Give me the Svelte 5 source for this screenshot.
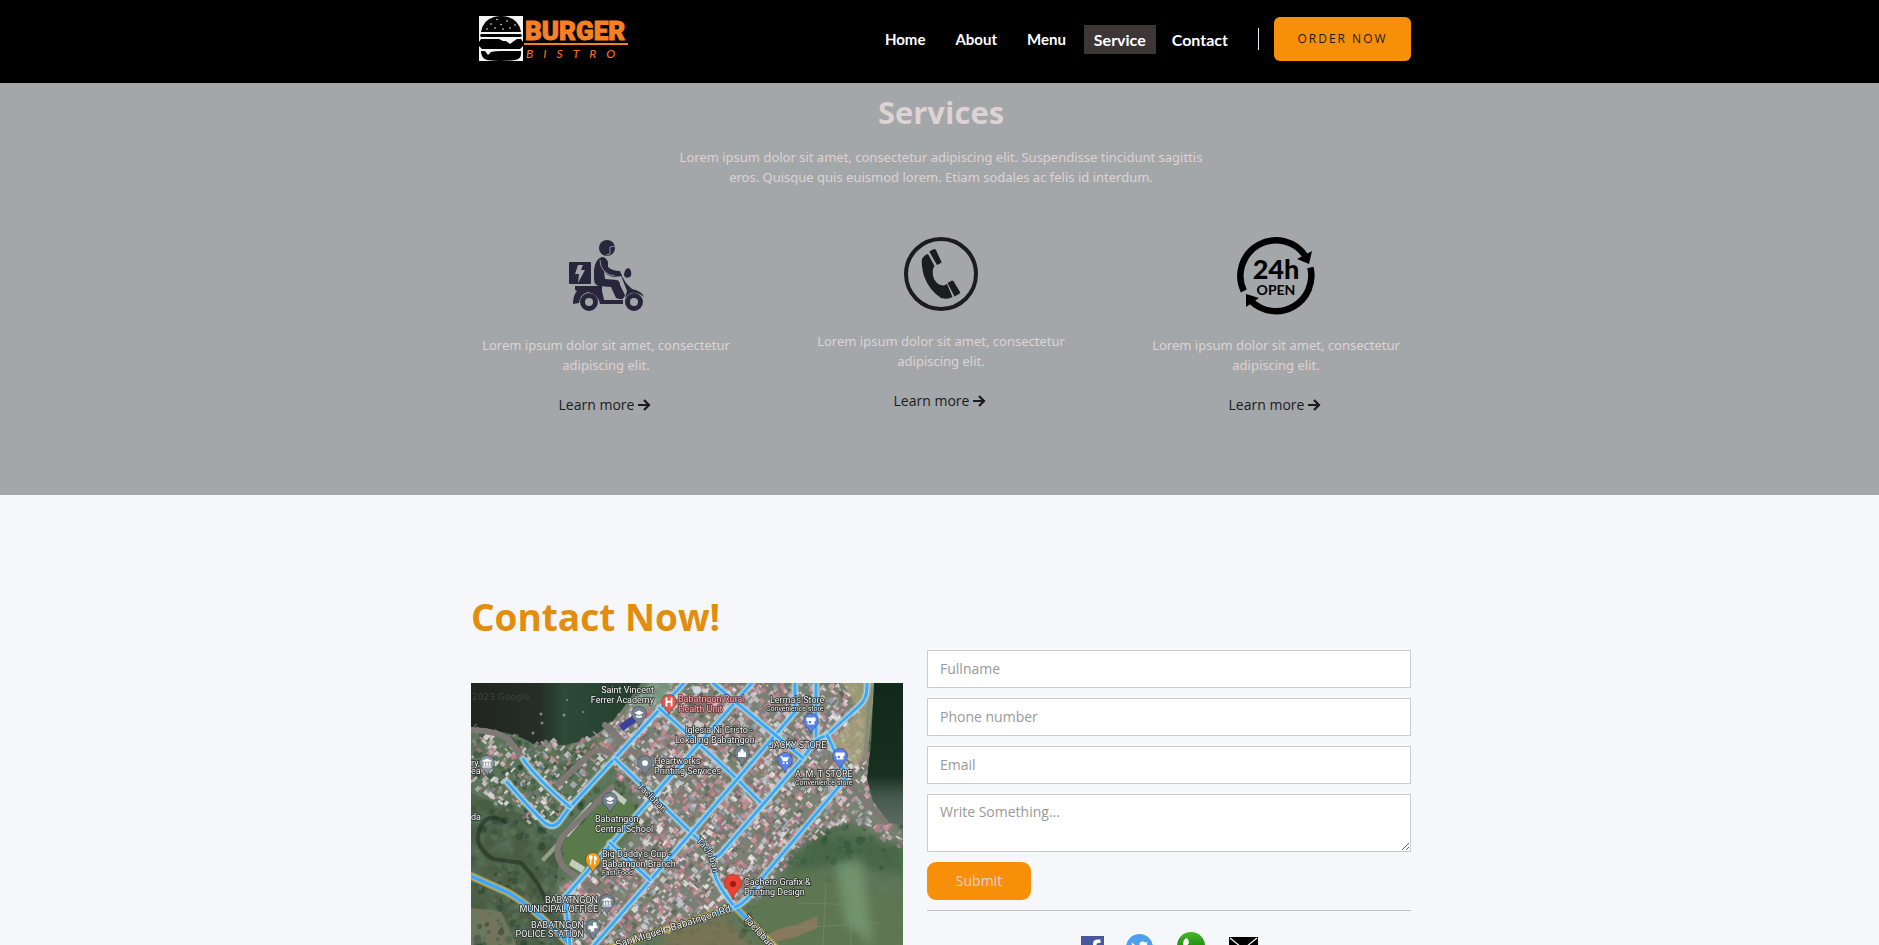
<script>
  const links = ['Home', 'About', 'Menu', 'Service', 'Contact'];
  const services = ['delivery', 'phone', 'open'];

  // Seeded generator so the rooftops and tree crowns stay the same on every load.
  let seed = 20230;
  const rnd = () => {
    seed = (seed * 1664525 + 1013904223) % 4294967296;
    return seed / 4294967296;
  };
  const inside = (x, y, poly) => {
    let hit = false;
    for (let i = 0, j = poly.length - 1; i < poly.length; j = i++) {
      const [xi, yi] = poly[i];
      const [xj, yj] = poly[j];
      if (yi > y !== yj > y && x < ((xj - xi) * (y - yi)) / (yj - yi) + xi) hit = !hit;
    }
    return hit;
  };
  const town = [[145, 30], [180, 0], [385, 0], [392, 60], [400, 110], [432, 150], [428, 162], [380, 135], [345, 150], [315, 180], [290, 212], [262, 224], [200, 245], [130, 262], [96, 262], [84, 205], [100, 195], [150, 170], [172, 130], [150, 95], [128, 60]];
  const shore = [[0, 42], [50, 55], [100, 60], [140, 38], [150, 62], [100, 118], [76, 150], [50, 132], [0, 105]];
  const school = [[143, 108], [160, 118], [168, 143], [112, 192], [92, 180], [94, 158]];
  const roofs = ['#d9d2d3', '#b9b3b8', '#e6c4ca', '#c98f98', '#a8707a', '#8b8489', '#c9ccd3', '#747476', '#f0eaea', '#9a8d84', '#d08c9b', '#5b6656', '#c5808a', '#98a3b2'];
  const greens = ['#2d4835', '#3d5a40', '#4d694c', '#25402d', '#5f7756', '#385237'];

  const trees = [];
  for (let i = 0; i < 1500; i++) {
    const x = rnd() * 432;
    const y = 40 + rnd() * 230;
    if (inside(x, y, school)) continue;
    if (x > 280 && y > 185 && rnd() < 0.9) continue;
    const inTown = inside(x, y, town);
    if (inTown && rnd() < 0.5) continue;
    trees.push({ x, y, r: 1 + rnd() * 3, c: greens[Math.floor(rnd() * greens.length)] });
  }
  const houses = [];
  for (let i = 0; i < 7600; i++) {
    const x = rnd() * 432;
    const y = rnd() * 270;
    const inTown = inside(x, y, town);
    const inShore = inside(x, y, shore);
    if (inside(x, y, school) || (!inTown && !inShore)) continue;
    if (inShore && !inTown && rnd() < 0.45) continue;
    houses.push({ x, y, w: 1.5 + rnd() * 5, h: 1.5 + rnd() * 4, c: roofs[Math.floor(rnd() * roofs.length)], a: rnd() < 0.5 ? -47 : 42 });
  }

  const lanes = [
    'M0 47 Q28 48 38 57 L52 76',
    'M88 100 L120 70 Q134 62 144 76',
    'M134 42 L192 97',
    'M141 104 L91 154 Q80 172 96 187 L132 210',
    'M377 100 L414 139',
    'M338 30 L345 57',
  ];
  const streets = [
    'M213 0 L99 124 L88 139 Q82 146 74 140 Q62 129 36 99',
    'M52 76 Q66 96 99 124',
    'M188 25 L227 60 L266 96 L292 122',
    'M144 76 L214 144 L232 161 Q246 176 243 188 Q244 200 264 224',
    'M281 0 L94 214 L99 262',
    'M324 0 V29 L221 149 L118 268',
    'M345 0 V57 L332 75 L251 169 Q248 173 244 174',
    'M242 0 L332 75',
    'M396 0 Q397 16 388 23 L356 52 L345 57',
    'M356 52 L376 94 L292 194 Q276 220 264 224',
    'M139 160 L179 197',
  ];
  const highways = ['M0 193 L36 209 Q60 222 99 262', 'M136 266 L214 240 L264 224 L308 268'];

  const labels = [
    { x: 183, y: 10, e: 1, t: 'Saint Vincent' },
    { x: 183, y: 20, e: 1, t: 'Ferrer Academy' },
    { x: 207, y: 19, t: 'Babatngon Rural', k: 'rose' },
    { x: 207, y: 29, t: 'Health Unit', k: 'rose' },
    { x: 299, y: 20, t: "Lerma's Store" },
    { x: 295, y: 28, t: 'Convenience store', k: 'tiny' },
    { x: 214, y: 50, t: 'Iglesia Ni Cristo -' },
    { x: 204, y: 60, t: 'Lokal ng Babatngon' },
    { x: 298, y: 65, t: 'JACKY STORE' },
    { x: 183, y: 81, t: 'Heartworks' },
    { x: 183, y: 91, t: 'Printing Services' },
    { x: 324, y: 94, t: 'A. M. T STORE' },
    { x: 324, y: 102, t: 'Convenience store', k: 'tiny' },
    { x: 124, y: 139, t: 'Babatngon' },
    { x: 124, y: 149, t: 'Central School' },
    { x: 131, y: 174, t: "Big Daddy's Cup -" },
    { x: 131, y: 184, t: 'Babatngon Branch' },
    { x: 131, y: 192, t: 'Fast Food', k: 'tiny' },
    { x: 127, y: 220, e: 1, t: 'BABATNGON' },
    { x: 127, y: 229, e: 1, t: 'MUNICIPAL OFFICE' },
    { x: 113, y: 245, e: 1, t: 'BABATNGON' },
    { x: 113, y: 254, e: 1, t: 'POLICE STATION' },
    { x: 273, y: 202, t: 'Cachero Grafix &' },
    { x: 273, y: 212, t: 'Printing Design' },
    { x: 0, y: 83, t: 'ry,' },
    { x: 0, y: 91, t: 'ea.' },
    { x: 0, y: 137, t: 'da' },
  ];
  const cap = 'M-4 -1 L0 -3 L4 -1 L0 1 Z M-2.5 1 V2.5 Q0 4 2.5 2.5 V1 L0 2 Z';
  const hall = 'M-4 -2 L0 -4 L4 -2 V-1 H-4 Z M-3 -.5 h1.5 v3 h-1.5 Z M-.7 -.5 h1.4 v3 h-1.4 Z M1.5 -.5 h1.5 v3 h-1.5 Z M-4 3 h8 v1 h-8 Z';
  const shop = 'M-4 -3 H4 V0 H3 V3 H-3 V0 H-4 Z M-2 0 V2 H0 V0 Z';
  const pins = [
    { x: 198, y: 19, c: '#e0584f', d: 'M-3 -4 h1.6 v3 h2.8 v-3 h1.6 v8 h-1.6 v-3.4 h-2.8 v3.4 h-1.6 Z' },
    { x: 168, y: 31, c: '#74848f', d: cap },
    { x: 174, y: 80, c: '#74848f', d: 'M-2.5 0 A2.5 2.5 0 1 1 2.5 0 A2.5 2.5 0 1 1 -2.5 0' },
    { x: 16, y: 80, c: '#8d979e', d: hall },
    { x: 139, y: 117, c: '#74848f', d: cap },
    { x: 122, y: 177, c: '#f09a1a', d: 'M-3.5 -4 h3 v3 l-1 1 v4 h-1 v-4 l-1 -1 Z M1 -4 q2.5 0 2.5 3 v1 h-1.3 v4 h-1.2 Z' },
    { x: 136, y: 219, c: '#74848f', d: hall },
    { x: 122, y: 244, c: '#74848f', d: 'M-4 -1 h4 v-3 h3 v3 h1 v2 h-3 v3 h-3 v-2 h-2 Z' },
    { x: 340, y: 38, c: '#5a82ee', d: shop },
    { x: 271, y: 70, c: '#74848f', d: 'M-3.5 3.5 V0 l1 -1.5 l1 1.5 V-2 l1.5 -2 l1.5 2 V0 l1 -1.5 l1 1.5 V3.5 Z' },
    { x: 314, y: 77, c: '#5a82ee', d: 'M-4 -3.5 h1.5 l.5 1 h5.5 l-1.5 3.5 h-4 l-1.4 -3.5 h-.6 Z M-2 2 h1.5 v1.5 h-1.5 Z M1 2 h1.5 v1.5 h-1.5 Z' },
    { x: 369, y: 73, c: '#5a82ee', d: shop },
  ];
  const outline = (poly) => poly.map((p) => p.join(',')).join(' ');
</script>

<div class="page">
  <header>
    <div class="container bar">
      <a class="brand" href="#home" aria-label="Burger Bistro">
        <svg width="152" height="46" viewBox="0 0 152 46">
          <rect width="44" height="45" fill="#f4f4f4" />
          <path d="M2 16 Q4 4 15 1 Q22 -1 29 1 Q40 4 42 16 Z" fill="#000" />
          <g fill="#fff">
            <circle cx="18" cy="3.500" r=".8" /><circle cx="28" cy="5" r=".8" /><circle cx="12" cy="8" r=".8" />
            <circle cx="22" cy="8.500" r=".8" /><circle cx="36" cy="9" r=".8" /><circle cx="8" cy="13" r=".8" />
            <circle cx="16" cy="12" r=".8" /><circle cx="24" cy="13" r=".8" /><circle cx="31" cy="12" r=".8" />
          </g>
          <path d="M2 18 H42 L43 19.500 L42 21 H2 L1 19.500 Z" fill="#000" />
          <path d="M2 23 H20 L24 25 H27 L31 28 L35 25 L38 23 H42 L44 26 V30 L41 33 H3 L0 30 V26 Z" fill="#000" />
          <path d="M2 35 H6 L9 39 L12 36 Q16 35 23 35 H42 Q43 43 36 44 Q22 46 8 44 Q2 42 2 35 Z" fill="#000" />
          <text class="logo-top" x="46" y="24">BURGER</text>
          <rect x="45" y="27" width="104" height="2" fill="#f58025" />
          <text class="logo-sub" x="47" y="42">BISTRO</text>
        </svg>
      </a>
      <nav>
        {#each links as link, i}
          <a class:active={link === 'Service'} class:large={i > 2} href={'#' + link.toLowerCase()}>{link}</a>
        {/each}
      </nav>
      <span class="divider"></span>
      <button class="order" type="button">ORDER NOW</button>
    </div>
  </header>

  <section class="services">
    <div class="container">
      <h2>Services</h2>
      <p class="intro">
        Lorem ipsum dolor sit amet, consectetur adipiscing elit. Suspendisse tincidunt sagittis
        eros. Quisque quis euismod lorem. Etiam sodales ac felis id interdum.
      </p>
      <div class="cards">
        {#each services as kind}
          <article>
            {#if kind === 'delivery'}
              <svg width="78" height="78" viewBox="0 0 78 78" fill="#29253a">
                <circle cx="40" cy="11" r="8" />
                <path d="M49 9 L43 10 L43 17 L39 18" fill="none" stroke="#a3a7aa" stroke-width=".8" />
                <rect x="2" y="25" width="22" height="22" rx="1" />
                <path d="M11 28 h5 l-2 5 h4 l-7 13 l1 -9 h-4 Z" fill="#a3a7aa" />
                <path d="M27 33 Q28 22 35 20 Q39 20 41 25 L41 30 Q45 34 53 34 L55 39 L47 40 Q40 39 37 34 L38 42 L50 43 Q53 44 53 48 L58 58 Q57 63 52 62 L49 61 L44 50 L32 49 Q27 48 27 42 Z" />
                <path d="M33 23 Q33 30 37 34 Q42 39 48 39" fill="none" stroke="#a3a7aa" stroke-width=".8" />
                <path d="M8 49 H35 V54 L37 63 H56 V67 H33 Q31 57 21 55 Q13 57 12 66 L6 67 Q6 58 10 54 L8 53 Z" />
                <path d="M53 36 L59 46 L65 52 Q75 54 77 60 Q70 55 64 56 Q60 58 58 61 L60 54 Z" />
                <path d="M57 37 Q58 31 62 31 Q65 34 64 39 Q61 42 58 40 Q57 39 57 37" />
                <circle cx="22" cy="65" r="6.500" fill="none" stroke="#29253a" stroke-width="5" />
                <circle cx="67" cy="65" r="6.500" fill="none" stroke="#29253a" stroke-width="5" />
              </svg>
            {:else if kind === 'phone'}
              <svg width="74" height="74" viewBox="0 0 74 74" fill="#1b1c20">
                <circle cx="37" cy="37" r="35" fill="none" stroke="#1b1c20" stroke-width="4" />
                <path d="M18 22 Q20 18 24 17 L30.500 29 Q27 33 30 42 Q34 49 40 48.500 L43 47 L48.500 60 Q44 63 37 61 Q25 53 20 39 Q17 28 18 22 Z" />
                <path d="M26 14 L30 12 Q31 12 32 13 L37 24 Q38 25 37 26 L33 28 L25.500 15 Z" />
                <path d="M43.500 46 L48 43.500 Q49 43 50 45 L56 55 Q56 57 55 57 L50.500 59.500 Z" />
              </svg>
            {:else}
              <svg width="78" height="78" viewBox="0 0 78 78">
                <path d="M6.800 54 A35.500 35.500 0 0 1 68.800 19.700 M73.400 30.400 A35.500 35.500 0 0 1 14 64" fill="none" stroke="#000" stroke-width="6.500" />
                <path d="M75 14 L60 22 L72 27 Z M9 57 L22 61 L9 70 Z" />
                <text class="hours" x="39" y="42">24h</text>
                <text class="open" x="39" y="58">OPEN</text>
              </svg>
            {/if}
            <p>Lorem ipsum dolor sit amet, consectetur adipiscing elit.</p>
            <a href="#more">
              Learn more
              <svg width="13" height="12" viewBox="0 0 13 12" fill="none" stroke="#1a1b1f" stroke-width="2.200">
                <path d="M0 6 H11 M6 1 L11 6 L6 11" />
              </svg>
            </a>
          </article>
        {/each}
      </div>
    </div>
  </section>

  <section class="contact">
    <div class="container">
      <h2>Contact Now!</h2>
      <div class="split">
        <svg class="map" viewBox="0 0 432 300" role="img" aria-label="Map of Babatngon">
          <defs>
            <filter id="ground" x="0" y="0" width="100%" height="100%">
              <feTurbulence type="fractalNoise" baseFrequency=".07" numOctaves="4" seed="5" />
              <feColorMatrix values="0 0 0 0 .12  0 0 0 0 .2  0 0 0 0 .13  1.6 0 0 0 -.65" />
            </filter>
            <filter id="soft"><feGaussianBlur stdDeviation=".7" /></filter>
            <filter id="wide"><feGaussianBlur stdDeviation="5" /></filter>
            <linearGradient id="bay" x1="0" x2="1">
              <stop offset="0" stop-color="#20251f" /><stop offset=".4" stop-color="#262f27" />
              <stop offset=".55" stop-color="#2d4a38" /><stop offset="1" stop-color="#223f2f" />
            </linearGradient>
            <linearGradient id="sea" x1="0" y1="0" x2="0" y2="1">
              <stop offset="0" stop-color="#10291a" /><stop offset=".65" stop-color="#17301f" />
              <stop offset=".8" stop-color="#45594e" /><stop offset="1" stop-color="#5d6b62" />
            </linearGradient>
            <path id="rd-miguel" d="M146 265 L216 243 L262 228" />
            <path id="rd-tac" d="M272 236 L305 272" />
            <path id="rd-tac2" d="M225 158 Q240 172 242 190" />
            <path id="rd-tac3" d="M166 104 L198 135" />
          </defs>
          <rect width="432" height="300" fill="#5b7457" />
          <path d="M0 110 L60 135 L90 160 L85 205 L100 262 V300 H0 Z" fill="#4a5c44" />
          <path d="M0 225 L30 228 L45 262 V300 H0 Z" fill="#75745a" />
          <g filter="url(#soft)">
            {#each trees as t}
              <circle cx={t.x} cy={t.y} r={t.r} fill={t.c} opacity=".6" />
            {/each}
          </g>
          <rect width="432" height="300" filter="url(#ground)" />
          <g filter="url(#wide)">
            <path d="M330 145 L432 162 V190 L360 182 L315 195 Z" fill="#2f5a3a" opacity=".5" />
            <path d="M280 222 L330 186 L432 210 V300 H290 Z" fill="#60774f" opacity=".75" />
            <path d="M195 250 L255 232 L300 285 H180 Z" fill="#7e7456" opacity=".8" />
            <path d="M365 180 L390 176 L402 262 L375 240 Z" fill="#7ba078" opacity=".7" />
          </g>
          <g filter="url(#wide)" fill="#8f8a84" opacity=".6">
            <polygon points={outline(town)} />
          </g>
          <path d="M292 256 Q305 244 325 242 L347 233 L346 245 L325 254 L300 260 Z" fill="#91795f" opacity=".8" />
          <g fill="none" stroke="#7b9070" stroke-width=".7" opacity=".8">
            <path d="M328 220 L400 222 M355 200 L352 262 M378 195 L380 262 M320 245 L410 240" />
          </g>
          <path d="M0 0 H170 L150 28 L138 42 Q122 60 92 62 L64 62 Q40 46 0 46 Z" fill="url(#bay)" />
          <path d="M100 62 Q126 58 140 40" fill="none" stroke="#80796d" stroke-width="3" />
          <g fill="#9fb0ab" opacity=".7">
            <circle cx="70" cy="31" r="1.500" /><circle cx="71" cy="40" r="1.500" /><circle cx="93" cy="32" r="1.500" />
            <circle cx="112" cy="29" r="1" /><circle cx="96" cy="17" r="1" /><circle cx="62" cy="50" r="1.500" />
          </g>
          <g filter="url(#soft)">
            {#each houses as h}
              <rect x={h.x} y={h.y} width={h.w} height={h.h} fill={h.c} opacity=".8" transform="rotate({h.a} {h.x} {h.y})" />
            {/each}
          </g>
          <path d="M372 0 H404 L397 66 L385 84 L362 58 L388 28 Z" fill="#aaa57c" opacity=".75" filter="url(#soft)" />
          <path d="M403 0 H432 V142 L418 140 L402 118 L396 96 L400 60 Z" fill="url(#sea)" />
          <path d="M400 4 L394 78" fill="none" stroke="#8c8a78" stroke-width="4" />
          <path d="M142 110 L162 120 L168 143 L112 192 L94 182 L92 160 Z" fill="#5b7a4b" />
          <path d="M92 150 L120 119 L124 123 L97 154 Z" fill="#d7dcd4" />
          <path d="M70 176 L88 157 L90 161 L73 179 Z" fill="#8fa184" />
          <path d="M142 106 L156 117 L153 122 L139 111 Z M101 176 L114 184 L111 190 L98 182 Z" fill="#c3cdbf" />
          <path d="M148 42 L168 28 L172 34 L152 48 Z" fill="#3c3f9b" />
          <path d="M162 28 Q172 18 183 24 L176 36 Z" fill="#dc6079" />
          <path d="M178 0 H205 L178 30 L160 22 Z" fill="#77a188" opacity=".7" />
          <circle cx="226" cy="7" r="4" fill="#cfd8e6" />
          <path d="M36 140 Q15 126 8 148 Q3 164 22 176 L50 180 Q70 200 76 222" fill="none" stroke="#20301f" stroke-width="4" opacity=".6" />
          {#each lanes as d}
            <path {d} class="road" stroke="#7f7976" stroke-width="6" />
          {/each}
          {#each streets as d}
            <path {d} class="road" stroke="#b9c4b0" stroke-width="8" opacity=".5" />
          {/each}
          {#each highways as d}
            <path {d} class="road" stroke="#a8924a" stroke-width="8" />
            <path {d} class="road" stroke="#d4cc9c" stroke-width="5" />
          {/each}
          <path d={highways[0]} class="road" stroke="#3fa6f4" stroke-width="4" />
          <path d="M246 230 L264 224 L276 236" class="road" stroke="#3fa6f4" stroke-width="4" />
          {#each streets as d}
            <path {d} class="road" stroke="#a9dcf4" stroke-width="5" />
            <path {d} class="road" stroke="#3fa6f4" stroke-width="3" />
          {/each}
          <text class="mark" x="1" y="17">2023 Google</text>
          {#each pins as p}
            <g transform="translate({p.x} {p.y}) scale(1.150)">
              <path d="M0 11 Q-1 8 -4 5 A6.500 6.500 0 1 1 4 5 Q1 8 0 11 Z" fill={p.c} stroke="#35404a" stroke-width=".5" />
              <path d={p.d} fill="#fff" />
            </g>
          {/each}
          <path d="M262 217 Q261 211 256 206 A8.500 8.500 0 1 1 268 206 Q263 211 262 217 Z" fill="#ea4335" stroke="#b3261e" stroke-width=".6" />
          <circle cx="262" cy="201" r="3" fill="#a11b14" />
          {#each labels as l}
            <text class="label {l.k ?? ''}" x={l.x} y={l.y} text-anchor={l.e ? 'end' : 'start'}>{l.t}</text>
          {/each}
          <text class="label way"><textPath href="#rd-miguel">San Miguel - Babatngon Rd</textPath></text>
          <text class="label way"><textPath href="#rd-tac">Tacloban</textPath></text>
          <text class="label"><textPath href="#rd-tac2">Tacloban</textPath></text>
          <text class="label"><textPath href="#rd-tac3">Tacloban</textPath></text>
        </svg>

        <div class="side">
          <form>
            <input type="text" placeholder="Fullname" aria-label="Fullname" />
            <input type="tel" placeholder="Phone number" aria-label="Phone number" />
            <input type="email" placeholder="Email" aria-label="Email" />
            <textarea placeholder="Write Something..." aria-label="Write Something..."></textarea>
            <button type="button">Submit</button>
          </form>
          <div class="social">
            <a href="#facebook" aria-label="Facebook">
              <svg width="23" height="23" viewBox="0 0 23 23">
                <rect width="23" height="23" fill="#4757a0" />
                <path d="M12 23 V14 H9.500 V10.500 H12 V8 Q12 3.500 16.500 3.500 H19.500 V7 H17.500 Q15.500 7 15.500 8.500 V10.500 H19.500 L19 14 H15.500 V23 Z" fill="#fff" />
              </svg>
            </a>
            <a href="#twitter" aria-label="Twitter">
              <svg width="27" height="27" viewBox="0 0 27 27">
                <circle cx="13.500" cy="13.500" r="13.500" fill="#4d9ff0" />
                <path d="M6 8.500 Q9 12 13.500 12 Q13 7.500 16.500 7.500 Q18.200 7.500 19.200 8.500 L21.500 7.700 L20.500 9.700 L22 9.500 L20.200 11.500 Q20 20 12 20.500 Q8 20.500 5.500 18.800 Q8.500 18.800 10 17.500 Q8 17.300 7.300 15.400 H8.500 Q6.300 14.500 6.200 12 L7.400 12.400 Q5 10.500 6 8.500 Z" fill="#fff" />
              </svg>
            </a>
            <a href="#whatsapp" aria-label="WhatsApp">
              <svg width="32" height="32" viewBox="0 0 32 32">
                <defs><linearGradient id="wa" x1="0" y1="0" x2="0" y2="1"><stop offset="0" stop-color="#46b82b" /><stop offset=".5" stop-color="#239010" /></linearGradient></defs>
                <path d="M16 1 A15 15 0 1 1 9 30 L1 31 L3 24 A15 15 0 0 1 16 1" fill="#fff" />
                <circle cx="16" cy="15" r="14" fill="url(#wa)" />
                <path d="M9 9 Q11 6 13 8 L14 12 L12.500 14 Q14 18 18 20 L20 18.500 L24 20.500 Q24 24 20 24 Q14 24 10 18 Q7 13 9 9 Z" fill="#fff" />
              </svg>
            </a>
            <a href="#mail" aria-label="Email us">
              <svg width="29" height="20" viewBox="0 0 29 20">
                <rect width="29" height="20" fill="#000" />
                <path d="M1 1 L14.500 12 L28 1 M1 19 L10 9 M28 19 L19 9" fill="none" stroke="#fff" stroke-width="1.200" />
              </svg>
            </a>
          </div>
        </div>
      </div>
    </div>
  </section>
</div>

<style>
  :global(body) {
    background: #f5f7fb;
  }
  .page {
    height: 100vh;
    overflow: hidden;
    font: 14px/20px 'Open Sans', 'Noto Sans', sans-serif;
    color: #1a1b1f;
  }
  .container {
    box-sizing: border-box;
    max-width: 943px;
    margin: 0 auto;
    padding-left: 3px;
  }
  a {
    color: inherit;
    text-decoration: none;
  }
  h2,
  p {
    margin: 0;
  }
  header {
    background: #000;
    height: 83px;
  }
  .bar {
    display: flex;
    align-items: center;
    padding-top: 16px;
  }
  .brand {
    margin: 0 auto 0 8px;
    height: 46px;
  }
  .logo-top {
    font: 900 26px Roboto, sans-serif;
    fill: #f58025;
    stroke: #f58025;
    stroke-width: 1px;
  }
  .logo-sub {
    font: italic 500 12px Lato, sans-serif;
    letter-spacing: 10px;
    fill: #f07020;
  }
  nav {
    display: flex;
    align-items: center;
    gap: 6px;
    font: 700 15px/20px Lato, sans-serif;
    color: #fff;
  }
  nav a {
    padding: 4px 12px 5px;
  }
  nav .large {
    padding: 5px 10px 4px;
    font-size: 16px;
  }
  .active {
    background: #3c3636;
  }
  .divider {
    width: 1px;
    height: 22px;
    margin: 0 15px 0 20px;
    background: #e4ebf3;
  }
  .order {
    width: 137px;
    height: 44px;
    padding: 0;
    border: 0;
    border-radius: 6px;
    background: #f78f08;
    color: #1a1b1f;
    font: 12px/20px 'Open Sans', sans-serif;
    letter-spacing: 2px;
  }
  .services {
    padding: 10px 0 80px;
    background: #a3a7aa;
    text-align: center;
  }
  .services h2 {
    font-size: 31px;
    line-height: 38px;
    color: #ded3d3;
  }
  .services p {
    font-family: 'Noto Sans', 'Open Sans', sans-serif;
    font-size: 13px;
    color: #ded3d3;
  }
  .services .intro {
    max-width: 554px;
    margin: 16px auto 50px;
  }
  .cards {
    display: grid;
    grid-template-columns: repeat(3, 1fr);
    gap: 65px;
  }
  article > svg {
    display: block;
    margin: 0 auto 20px;
  }
  article > a {
    display: inline-flex;
    align-items: center;
    gap: 4px;
    margin-top: 20px;
    padding-right: 2px;
  }
  .hours {
    font: 900 27px Lato, sans-serif;
    text-anchor: middle;
  }
  .open {
    font: 700 14px Lato, sans-serif;
    text-anchor: middle;
  }
  .contact {
    padding-top: 98px;
  }
  .contact h2 {
    font-size: 37px;
    line-height: 48px;
    color: #e28e0c;
  }
  .split {
    display: grid;
    grid-template-columns: 432fr 484fr;
    gap: 24px;
    align-items: start;
    padding-top: 9px;
  }
  .map {
    display: block;
    width: 100%;
    margin-top: 33px;
  }
  .road {
    fill: none;
    stroke-linecap: round;
    stroke-linejoin: round;
  }
  .label {
    font: 9px Roboto, sans-serif;
    fill: #f2f2f2;
    stroke: #2a2d2c;
    stroke-width: 1.6px;
    stroke-linejoin: round;
    paint-order: stroke;
  }
  .rose {
    fill: #f2b3b6;
    stroke: #6b2c33;
  }
  .tiny {
    font-size: 7px;
  }
  .way {
    font-size: 10px;
  }
  .mark {
    font: 9px 'DejaVu Sans', sans-serif;
    fill: #3d443e;
  }
  form {
    display: flex;
    flex-direction: column;
    gap: 10px;
    padding-bottom: 10px;
    border-bottom: 1px solid #c0c0c2;
  }
  input,
  textarea {
    box-sizing: border-box;
    width: 100%;
    height: 38px;
    margin: 0;
    padding: 7px 12px 9px;
    border: 1px solid #ccc;
    border-radius: 0;
    background: #fff;
    font: 14px/20px 'Open Sans', sans-serif;
  }
  textarea {
    height: 58px;
  }
  input::placeholder,
  textarea::placeholder {
    color: #999;
  }
  form button {
    width: 104px;
    height: 38px;
    border: 0;
    border-radius: 9px;
    background: #f78f08;
    color: #ded3d3;
    font: 14px/20px 'Open Sans', sans-serif;
  }
  .social {
    display: flex;
    justify-content: center;
    align-items: center;
    gap: 22px;
    padding-top: 20px;
  }
  .social a,
  .social svg {
    display: block;
  }
</style>
